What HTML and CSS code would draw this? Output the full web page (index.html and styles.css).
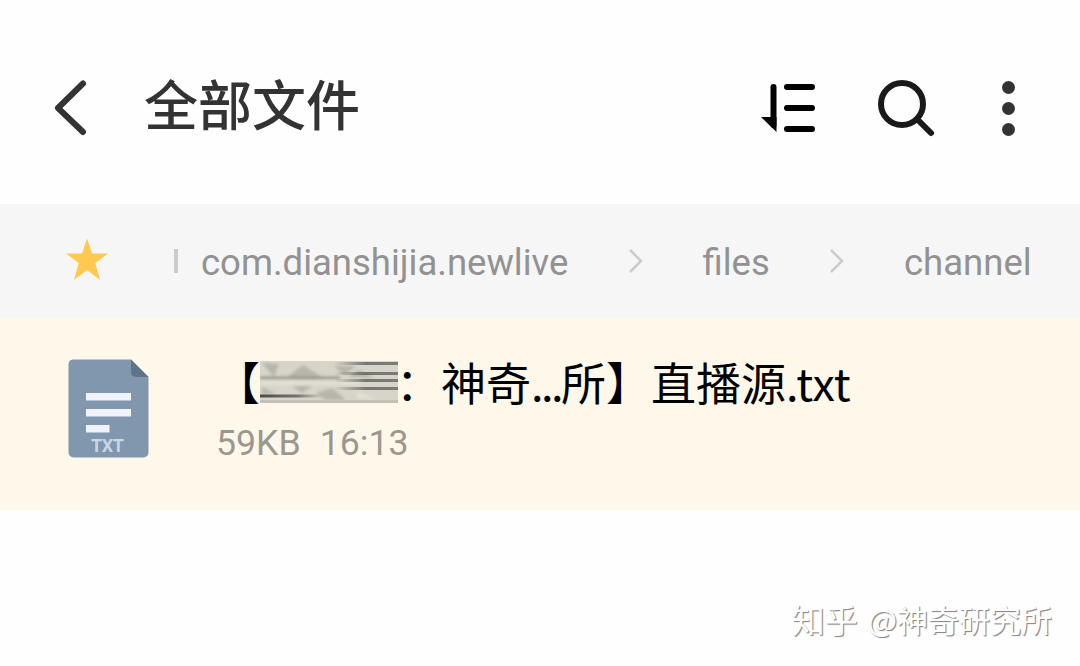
FILE: index.html
```
<!DOCTYPE html>
<html lang="zh-CN">
<head>
    <meta charset="UTF-8">
    <meta name="viewport" content="width=device-width, initial-scale=1.0">
    <title>全部文件</title>
    <link rel="stylesheet" href="styles.css">
</head>
<body>
    <header class="toolbar">
        <svg class="back" width="40" height="60" viewBox="0 0 40 60">
            <path d="M33 6.500 8 31 33 55" fill="none" stroke="#333" stroke-width="6" stroke-linecap="round" stroke-linejoin="round"/>
        </svg>
        <h1>全部文件</h1>
        <div class="actions">
            <svg class="sort" width="56" height="52" viewBox="0 0 56 52">
                <path d="M13.500 5v38" stroke="#000" stroke-width="6" stroke-linecap="round"/>
                <path d="M1 35h15.500v15z" fill="#000"/>
                <path d="M27 5h25M27 26h25M27 47h25" stroke="#000" stroke-width="6" stroke-linecap="round"/>
            </svg>
            <svg class="search" width="60" height="60" viewBox="0 0 60 60">
                <circle cx="26" cy="26" r="21" fill="none" stroke="#1a1a1a" stroke-width="6"/>
                <path d="M41 41 55 55" stroke="#1a1a1a" stroke-width="6" stroke-linecap="round"/>
            </svg>
            <div class="more"><i></i><i></i><i></i></div>
        </div>
    </header>

    <nav class="path">
        <svg class="star" width="44" height="44" viewBox="0 0 44 44">
            <path d="M22 1.500 27 16.500H43L30.300 26 35 43 22 33 9 43 13.700 26 1 16.500H17z" fill="#ffc84f"/>
        </svg>
        <span class="bar"></span>
        <span class="crumb package">com.dianshijia.newlive</span>
        <svg class="arrow" width="16" height="26" viewBox="0 0 16 26">
            <path d="M2 2 13 13 2 24" fill="none" stroke="#ccc" stroke-width="2.500"/>
        </svg>
        <span class="crumb folder">files</span>
        <svg class="arrow" width="16" height="26" viewBox="0 0 16 26">
            <path d="M2 2 13 13 2 24" fill="none" stroke="#ccc" stroke-width="2.500"/>
        </svg>
        <span class="crumb">channel</span>
    </nav>

    <main class="file">
        <svg class="doc" width="82" height="100" viewBox="0 0 82 100">
            <path d="M5 .500H63L80.500 18V93.500a5 5 0 0 1-5 5H5.500a5 5 0 0 1-5-5V5.500A5 5 0 0 1 5 .500z" fill="#8097ae"/>
            <path d="M63 .500 80.500 18H68a5 5 0 0 1-5-5z" fill="#5f7487"/>
            <path d="M18 34h45v7.500H18zM18 50h45V57.500H18zM18 66h23.500V73.500H18z" fill="#f0f4fa"/>
            <text class="ext" x="39.500" y="93" text-anchor="middle" textLength="33">TXT</text>
        </svg>
        <div class="info">
            <div class="name"><span>【</span><svg class="mosaic" width="138" height="42" viewBox="0 0 138 42">
                    <defs>
                        <linearGradient id="right" gradientUnits="userSpaceOnUse" x1="74" x2="138"><stop offset="0" stop-color="#444" stop-opacity="0"/><stop offset=".5" stop-color="#444" stop-opacity=".65"/><stop offset="1" stop-color="#555" stop-opacity=".7"/></linearGradient>
                        <linearGradient id="left" gradientUnits="userSpaceOnUse" x1="0" x2="62"><stop offset="0" stop-color="#333" stop-opacity=".85"/><stop offset=".6" stop-color="#333" stop-opacity=".6"/><stop offset="1" stop-color="#333" stop-opacity="0"/></linearGradient>
                        <filter id="soft"><feGaussianBlur stdDeviation="1.600"/></filter>
                    </defs>
                    <rect width="138" height="42" fill="#d7d5ca"/>
                    <g filter="url(#soft)">
                        <path d="M2 2 14 16 19 3zM27 16 43 4 62 16zM74 5 84 14 96 5z" fill="#b8b6ac"/>
                        <path d="M2 26 16 33H2zM32 25h20l-10 7zM56 32l16-5 14 12H65zM88 16l11-7 16 8z" fill="#b8b6ac"/>
                        <path d="M0 19h100v5H0zM97 30l18 8H97z" fill="#e2dfd3"/>
                        <path d="M0 17h80" stroke="#8f8d84" stroke-width="2.500"/>
                    </g>
                    <path d="M74 1h64v3H74zM70 11h68v3H70zM66 18h72v3H66zM70 26h68v3H70z" fill="url(#right)"/>
                    <path d="M0 33.500h62v3H0z" fill="url(#left)"/>
                    <path d="M0 39h138v3H0z" fill="#c3c1b6"/>
                </svg><span class="colon">：</span>神奇<span class="dots">...</span>所】直播源<span class="suffix">.txt</span></div>
            <div class="meta"><span>59KB</span><span>16:13</span></div>
        </div>
    </main>

    <footer class="watermark"><span class="site">知乎</span><span>@神奇研究所</span></footer>
</body>
</html>
```

FILE: styles.css
```
body {
    font-family: Roboto, "Noto Sans CJK SC", sans-serif;
    background-color: #fefefe;
    margin: 0;
    height: 666px;
    overflow: hidden;
    display: flex;
    flex-direction: column;
}

svg {
    display: block;
    flex: none;
}

.toolbar {
    height: 204px;
    padding: 0 65px 0 50px;
    box-sizing: border-box;
    display: flex;
    align-items: center;
}

.back {
    margin-top: 10px;
}

h1 {
    font: 500 54px/80px "Noto Sans CJK SC", sans-serif;
    color: #333;
    margin: 2px 0 0 54px;
}

.actions {
    display: flex;
    align-items: center;
    margin: 12px 0 0 auto;
}

.search {
    margin: 0 66px 0 60px;
}

.more {
    display: flex;
    flex-direction: column;
    gap: 8px;
}

.more i {
    width: 13px;
    height: 13px;
    border-radius: 50%;
    background: #333;
}

.path {
    height: 114px;
    padding-left: 65px;
    background: #f6f6f6;
    display: flex;
    align-items: center;
}

.star {
    margin-bottom: 4px;
}

.bar {
    width: 4px;
    height: 24px;
    margin: 0 23px 1px 65px;
    background: #ccc;
}

.crumb {
    font-size: 36.500px;
    line-height: 44px;
    color: #929292;
    margin-top: 4px;
    white-space: nowrap;
}

.package {
    width: 367px;
}

.folder {
    width: 67px;
}

.arrow {
    margin: 0 59px 0 59.500px;
}

.file {
    height: 192px;
    padding: 41px 0 0 68px;
    box-sizing: border-box;
    background: #fef8eb;
    display: flex;
}

.ext {
    font: 700 18px Roboto, sans-serif;
    fill: #c8d6e6;
}

.info {
    margin: -10px 0 0 65px;
}

.name {
    display: flex;
    align-items: center;
    font: 400 45px/66px "Noto Sans CJK SC", sans-serif;
    color: #000;
    white-space: nowrap;
}

.mosaic {
    margin: 0 -2px 0 0;
}

.dots {
    letter-spacing: -2.500px;
}

.meta {
    display: flex;
    gap: 19px;
    margin: 6px 0 0 1px;
    font-size: 35.700px;
    line-height: 44px;
    color: #9c978e;
}

.watermark {
    display: flex;
    gap: 10px;
    margin: auto 28px 24px auto;
    font: 400 31px/46px "Noto Sans CJK SC", sans-serif;
    color: #fff;
    text-shadow: 1px 1px 1px #888, 1px 1px 0 #bbb;
}

.site {
    font-size: 33px;
}
```
